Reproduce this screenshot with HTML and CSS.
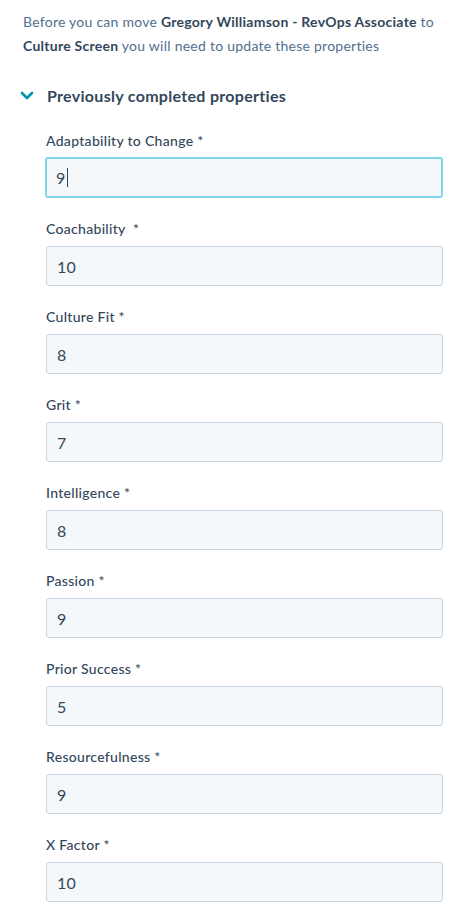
FILE: index.html
```html
<!DOCTYPE html>
<html>
<head>
<meta charset="utf-8">
<link rel="stylesheet" href="styles.css">
</head>
<body>
<div class="panel">
  <p class="intro">Before you can move <b>Gregory Williamson - RevOps Associate</b> to <b>Culture Screen</b> you will need to update these properties</p>
  <div class="section-head">
    <svg class="chev" width="14" height="9" viewBox="0 0 14 9"><path d="M2 2 L7 7 L12 2" fill="none" stroke="#0091ae" stroke-width="2.6" stroke-linecap="round" stroke-linejoin="round"/></svg>
    <span>Previously completed properties</span>
  </div>
  <div class="fields">
    <div class="field"><label>Adaptability to Change *</label><div class="input focus">9<span class="caret"></span></div></div>
    <div class="field"><label>Coachability&nbsp; *</label><div class="input">10</div></div>
    <div class="field"><label>Culture Fit *</label><div class="input">8</div></div>
    <div class="field"><label>Grit *</label><div class="input">7</div></div>
    <div class="field"><label>Intelligence *</label><div class="input">8</div></div>
    <div class="field"><label>Passion *</label><div class="input">9</div></div>
    <div class="field"><label>Prior Success *</label><div class="input">5</div></div>
    <div class="field"><label>Resourcefulness *</label><div class="input">9</div></div>
    <div class="field"><label>X Factor *</label><div class="input">10</div></div>
  </div>
</div>
</body>
</html>
```

FILE: styles.css
```css
html, body { margin: 0; padding: 0; background: #fff; }
body { font-family: Lato, "Noto Sans", sans-serif; color: #33475b; }
.panel { padding: 10px 23px 0 23px; }
.intro { margin: 0; font-size: 14px; line-height: 24px; color: #516f90; letter-spacing: 0.25px; }
.intro b { font-weight: 700; color: #33475b; }
.section-head { display: flex; align-items: center; margin-top: 24px; height: 26px; }
.chev { margin-left: -3px; margin-right: 13px; }
.section-head span { font-size: 16px; font-weight: 700; color: #33475b; letter-spacing: 0.3px; }
.fields { padding-left: 23px; margin-top: 23px; display: flex; flex-direction: column; gap: 21px; }
.field { display: flex; flex-direction: column; }
.field label { font-size: 14px; font-weight: 500; line-height: 20px; height: 20px; margin-bottom: 7px; color: #33475b; letter-spacing: 0.3px; }
.input { box-sizing: border-box; height: 40px; border: 1px solid #cbd6e2; border-radius: 3px; background: #f5f8fa; font-size: 16px; padding: 0 10px; color: #33475b; display: flex; align-items: center; letter-spacing: 0.3px; }
.input.focus { border: 2px solid #7fd6e6; padding: 0 9px; height: 41px; margin-left: -1px; margin-top: -1px; }
.caret { display: inline-block; width: 1px; height: 19px; background: #33475b; margin-left: 1px; }
```
